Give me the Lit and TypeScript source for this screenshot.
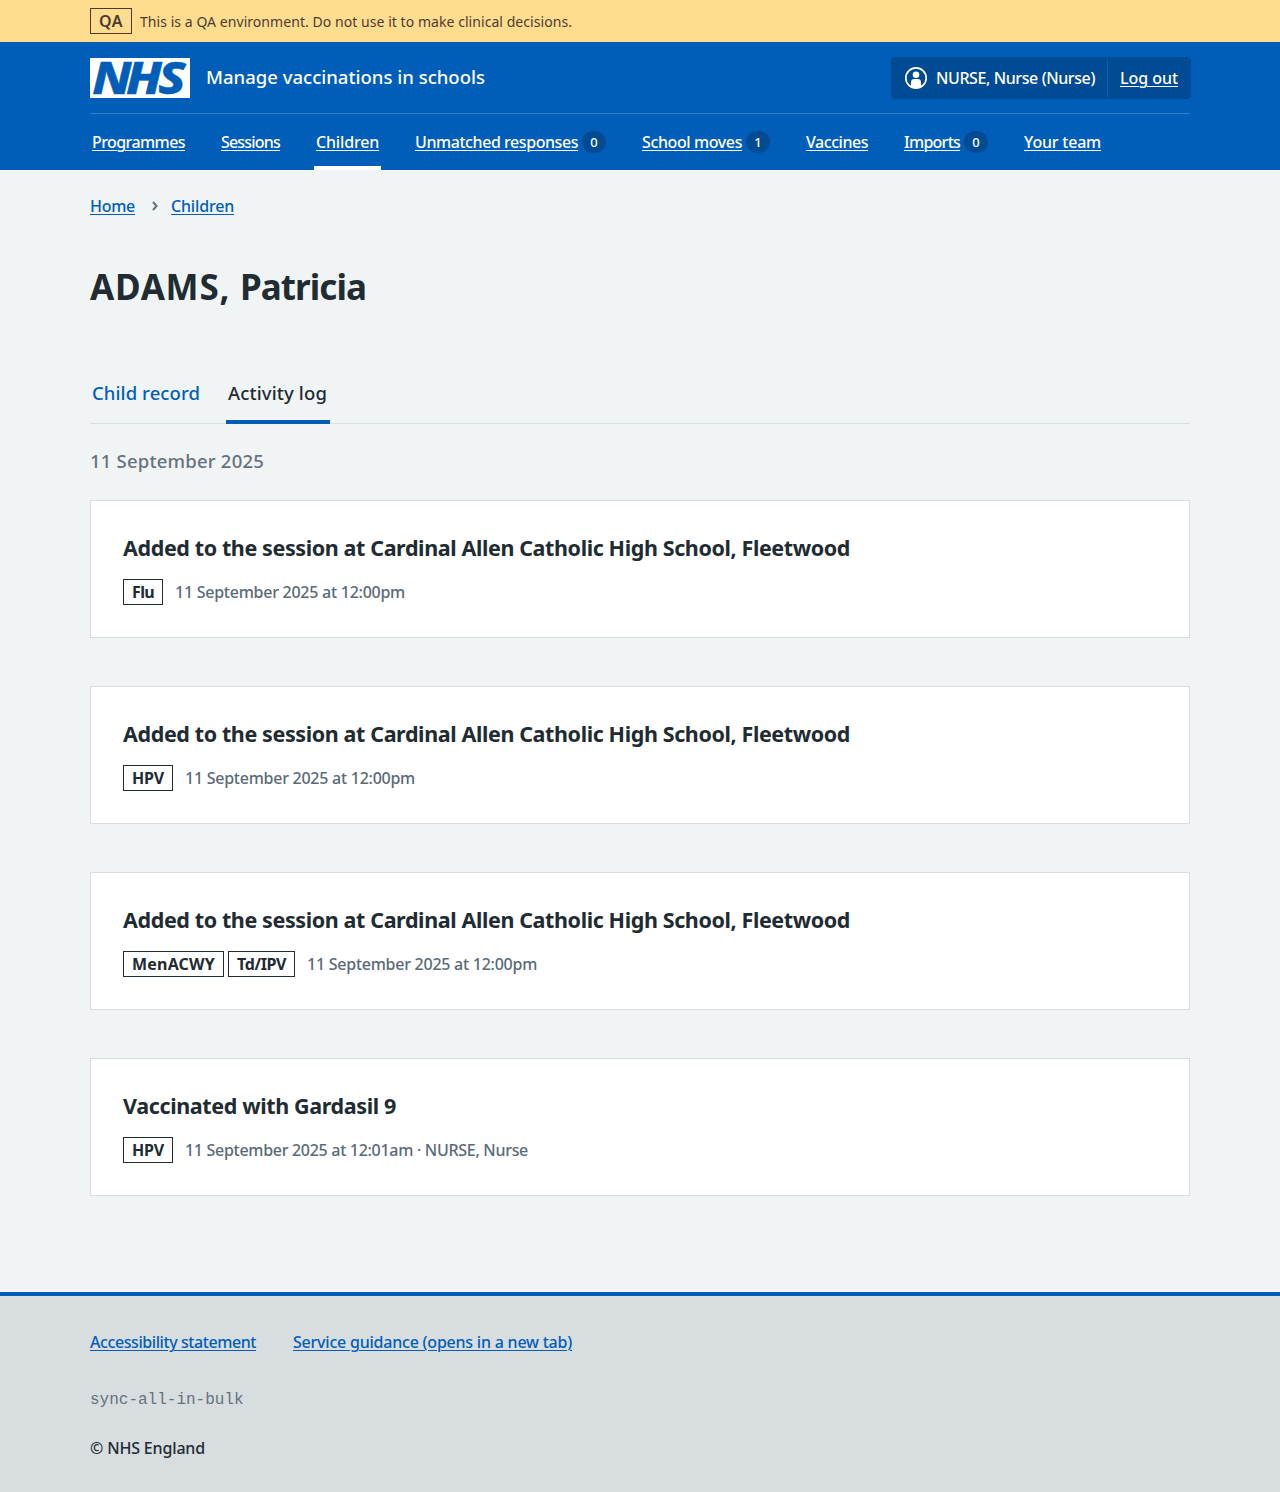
import { LitElement, html, css, svg, nothing } from "lit";
import { customElement, property } from "lit/decorators.js";

const FAMILY = `"Noto Sans"`;
const ctx = document.createElement("canvas").getContext("2d")!;

/** A run of text tracked so that it sets to the given measure. */
const run = (text: string, width: number, size = 16, weight = 500) => {
  ctx.font = `${weight} ${size}px ${FAMILY}`;
  const spacing = (width - ctx.measureText(text).width) / text.length;
  return html`<span style="letter-spacing:${spacing.toFixed(3)}px">${text}</span>`;
};

interface NavItem { label: string; width: number; count?: number; current?: boolean }
const NAV: NavItem[] = [
  { label: "Programmes", width: 93 },
  { label: "Sessions", width: 59 },
  { label: "Children", width: 63, current: true },
  { label: "Unmatched responses", width: 163, count: 0 },
  { label: "School moves", width: 100, count: 1 },
  { label: "Vaccines", width: 62 },
  { label: "Imports", width: 56, count: 0 },
  { label: "Your team", width: 77 },
];

interface Tag { label: string; width: number }
const FLU: Tag = { label: "Flu", width: 22 };
const HPV: Tag = { label: "HPV", width: 32 };
const MENACWY: Tag = { label: "MenACWY", width: 83 };
const TDIPV: Tag = { label: "Td/IPV", width: 49 };

interface Entry { title: string; titleWidth: number; tags: Tag[]; meta: string; metaWidth: number }
const added = (tags: Tag[]): Entry => ({
  title: "Added to the session at Cardinal Allen Catholic High School, Fleetwood",
  titleWidth: 727,
  tags,
  meta: "11 September 2025 at 12:00pm",
  metaWidth: 230,
});
const ENTRIES: Entry[] = [
  added([FLU]),
  added([HPV]),
  added([MENACWY, TDIPV]),
  {
    title: "Vaccinated with Gardasil 9",
    titleWidth: 273,
    tags: [HPV],
    meta: "11 September 2025 at 12:01am · NURSE, Nurse",
    metaWidth: 343,
  },
];

const shared = css`
  * { box-sizing: border-box; }
  :host {
    display: block;
    font: 500 16px/24px "Noto Sans", "Open Sans", sans-serif;
    color: #212b32;
  }
  h1, h2, h3, p, ul { margin: 0; padding: 0; list-style: none; }
  a { color: #005eb8; text-decoration: underline; text-decoration-thickness: 1px; text-underline-offset: 2px; }
  span { white-space: pre; }
  .container { width: 1100px; margin: 0 auto; }
`;

@customElement("app-banner")
class AppBanner extends LitElement {
  static styles = [shared, css`
    .banner { background: #ffdc8e; color: #4d3b33; height: 42px; }
    .container { display: flex; align-items: center; gap: 8px; height: 42px; }
    .tag { border: 1px solid #4d3b33; height: 26px; width: 42px; text-align: center; line-height: 24px; font-weight: 600; }
    .text { font-size: 14px; font-weight: 400; padding-top: 1px; }
  `];
  render() {
    return html`<div class="banner"><div class="container">
      <strong class="tag">${run("QA", 24, 16, 600)}</strong>
      <span class="text">${run("This is a QA environment. Do not use it to make clinical decisions.", 432, 14, 400)}</span>
    </div></div>`;
  }
}

@customElement("app-header")
class AppHeader extends LitElement {
  static styles = [shared, css`
    .header { background: #005eb8; color: #fff; height: 128px; }
    a { color: #fff; }
    .top { display: flex; align-items: center; height: 72px; border-bottom: 1px solid #337ec6; }
    .logo { display: block; width: 100px; height: 40px; overflow: visible; }
    .mark { font: italic 800 45px "Noto Sans", sans-serif; fill: #005eb8; stroke: #005eb8; stroke-width: 0.5px; }
    .service { font-size: 18.5px; margin-left: 16px; flex: 1; padding-bottom: 2px; }
    .account { display: flex; background: #004b93; border-radius: 4px; height: 42px; margin-right: -1px; padding: 1px 0; }
    .user, .logout { display: flex; align-items: center; padding: 0 12px; }
    .user { gap: 8px; padding-left: 13px; border-right: 1px solid #005eb8; }
    .logout { padding-right: 13px; }
    .nav { display: flex; gap: 32px; height: 56px; }
    .item { display: flex; align-items: center; gap: 4px; padding: 4px 2px 0; border-bottom: 4px solid transparent; }
    .current { border-bottom-color: #fff; }
    .count { background: #004b93; border-radius: 11px; width: 24px; height: 22px; font-size: 13px; line-height: 23px; text-align: center; }
  `];
  render() {
    return html`<header class="header"><div class="container">
      <div class="top">
        <svg class="logo" viewBox="0 0 100 40" role="img" aria-label="NHS">
          <rect width="100" height="40" fill="#fff"></rect>
          <text class="mark" transform="scale(1.13 1)" x="2 31.8 60.3" y="36">NHS</text>
        </svg>
        <span class="service">${run("Manage vaccinations in schools", 279, 18.5)}</span>
        <div class="account">
          <div class="user">
            <svg width="24" height="24" viewBox="0 0 24 24">
              <circle cx="12" cy="12" r="10.2" fill="none" stroke="#fff" stroke-width="1.7"></circle>
              <circle cx="12" cy="8.8" r="3.3" fill="#fff"></circle>
              <path d="M7 20.6V16.4a3.4 3.4 0 0 1 3.4-3.4h3.2a3.4 3.4 0 0 1 3.4 3.4v4.2a10 10 0 0 1-10 0Z" fill="#fff"></path>
            </svg>
            ${run("NURSE, Nurse (Nurse)", 159)}
          </div>
          <div class="logout"><a>${run("Log out", 58)}</a></div>
        </div>
      </div>
      <nav class="nav">
        ${NAV.map((n) => html`<div class="item ${n.current ? "current" : ""}">
          <a>${run(n.label, n.width)}</a>${n.count === undefined ? nothing : html`<span class="count">${n.count}</span>`}
        </div>`)}
      </nav>
    </div></header>`;
  }
}

@customElement("activity-card")
class ActivityCard extends LitElement {
  static styles = [shared, css`
    .card { background: #fff; border: 1px solid #d8dde0; height: 138px; padding: 32px; }
    .title { font-size: 21.5px; line-height: 30px; font-weight: 700; }
    .meta { display: flex; align-items: center; margin-top: 16px; height: 26px; }
    .tags { display: flex; gap: 4px; margin-right: 12px; }
    .tag { border: 1px solid #212b32; height: 26px; line-height: 24px; padding: 0 8px; font-weight: 700; }
    .when { color: #5a6a78; }
  `];
  @property({ attribute: false }) entry!: Entry;
  render() {
    const e = this.entry;
    return html`<article class="card">
      <h3 class="title">${run(e.title, e.titleWidth, 21.5, 700)}</h3>
      <div class="meta">
        <div class="tags">${e.tags.map((t) => html`<strong class="tag">${run(t.label, t.width, 16, 700)}</strong>`)}</div>
        <span class="when">${run(e.meta, e.metaWidth)}</span>
      </div>
    </article>`;
  }
}

@customElement("app-footer")
class AppFooter extends LitElement {
  static styles = [shared, css`
    .footer { background: #d8dde0; border-top: 4px solid #005eb8; height: 200px; padding-top: 34px; }
    .links { display: flex; gap: 37px; }
    .version { font: 16px/24px "Liberation Mono", monospace; color: #65717c; margin-top: 34px; }
    .copyright { margin-top: 24px; }
  `];
  render() {
    return html`<footer class="footer"><div class="container">
      <div class="links">
        <a>${run("Accessibility statement", 166)}</a>
        <a>${run("Service guidance (opens in a new tab)", 279)}</a>
      </div>
      <p class="version">sync-all-in-bulk</p>
      <p class="copyright">${run("© NHS England", 115)}</p>
    </div></footer>`;
  }
}

@customElement("app-root")
class AppRoot extends LitElement {
  static styles = [shared, css`
    :host { background: #f0f4f5; }
    .main { height: 1122px; padding-top: 24px; }
    .crumbs { display: flex; align-items: center; height: 24px; }
    .chevron { margin: 0 12px 0 16px; width: 8px; height: 12px; }
    .name { font-size: 35px; line-height: 48px; font-weight: 700; margin-top: 45px; }
    .tabs { display: flex; gap: 24px; margin-top: 65px; height: 48px; font-size: 18.5px; line-height: 28px; box-shadow: inset 0 -1px #d8dde0; }
    .tab { padding: 3px 2px 0; border-bottom: 4px solid transparent; text-decoration: none; }
    .active { color: #212b32; border-bottom-color: #005eb8; padding-right: 3px; }
    .date { font-size: 18.5px; line-height: 28px; font-weight: 500; color: #65717c; margin-top: 23px; }
    .log { display: grid; gap: 48px; margin-top: 25px; }
  `];
  render() {
    return html`
      <app-banner></app-banner>
      <app-header></app-header>
      <main class="main"><div class="container">
        <nav class="crumbs">
          <a>${run("Home", 45)}</a>
          <svg class="chevron" viewBox="0 0 8 12">${svg`<path d="M2 2l3.6 4L2 10" fill="none" stroke="#65717c" stroke-width="2"></path>`}</svg>
          <a>${run("Children", 63)}</a>
        </nav>
        <h1 class="name">${run("ADAMS, ", 150, 35, 700)}${run("Patricia", 126, 35, 700)}</h1>
        <nav class="tabs">
          <a class="tab">${run("Child record", 108, 18.5)}</a>
          <a class="tab active">${run("Activity log", 99, 18.5)}</a>
        </nav>
        <h2 class="date">${run("11 September 2025", 174, 18.5)}</h2>
        <div class="log">${ENTRIES.map((e) => html`<activity-card .entry=${e}></activity-card>`)}</div>
      </div></main>
      <app-footer></app-footer>`;
  }
}
